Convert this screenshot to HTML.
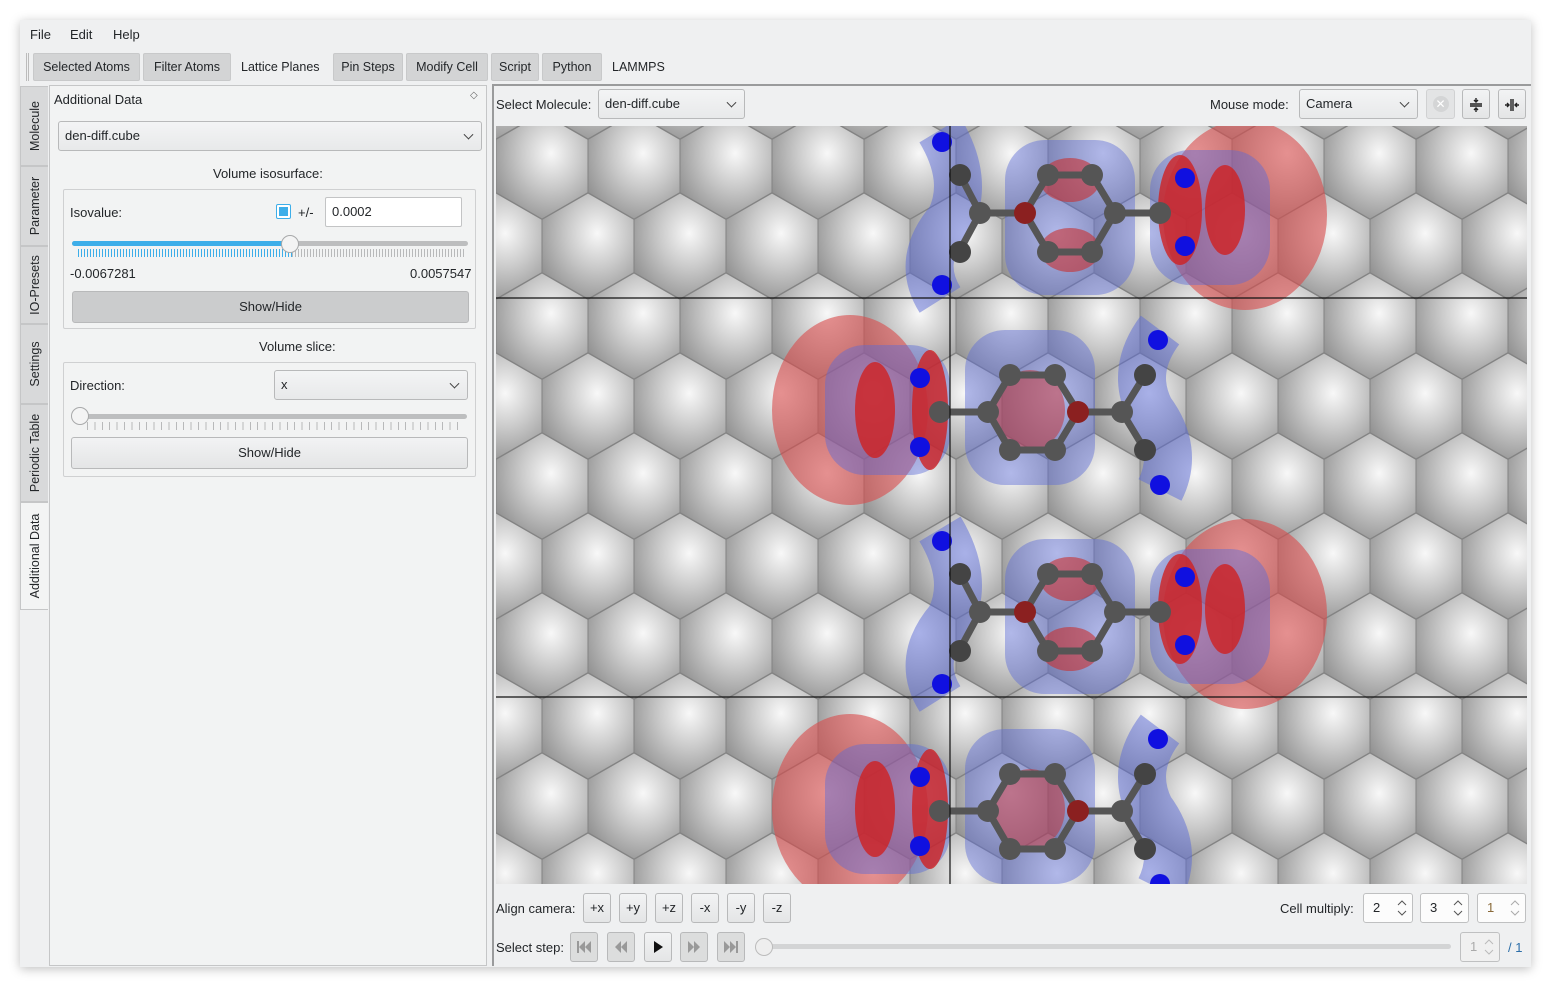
<!DOCTYPE html>
<html><head><meta charset="utf-8"><style>
*{box-sizing:border-box;margin:0;padding:0}
body{width:1551px;height:987px;background:#fff;font-family:"Liberation Sans","DejaVu Sans",sans-serif;font-size:13px;color:#232629;position:relative;overflow:hidden}
.win{position:absolute;left:20px;top:20px;width:1511px;height:947px;background:#eff0f1;box-shadow:0 2px 10px rgba(0,0,0,.25)}
.abs{position:absolute;white-space:nowrap}
.tab{position:absolute;top:33px;height:28px;background:#d3d4d5;border:1px solid #c8c9ca;border-radius:2px;line-height:27px;font-size:12.5px;text-align:center;white-space:nowrap;overflow:hidden}
.btn{position:absolute;background:linear-gradient(#f2f3f4,#e4e5e6);border:1px solid #b8b9ba;border-radius:3px;text-align:center;font-size:13px}
.vt{position:absolute;left:0;width:28px;background:#d8d9da;border:1px solid #c5c6c7;border-right:none}
.vt span{position:absolute;left:50%;top:50%;transform:translate(-50%,-50%) rotate(-90deg);white-space:nowrap;font-size:12.5px}
.combo{position:absolute;background:linear-gradient(#f3f4f5,#e8e9ea);border:1px solid #b8b9ba;border-radius:3px;padding-left:6px;font-size:13px}
.combo:after{content:"";position:absolute;right:9px;top:50%;width:6px;height:6px;border-right:1.3px solid #444;border-bottom:1.3px solid #444;transform:translateY(-70%) rotate(45deg)}
.spin{position:absolute;background:#fcfcfc;border:1px solid #bfc0c1;border-radius:3px;padding-left:9px;line-height:28px}
.spin svg{position:absolute;right:5px;top:4px}
.mb svg{display:block;margin:8px auto}
</style></head><body>
<div class="win">
 <div class="abs" style="left:10px;top:7px">File</div>
 <div class="abs" style="left:50px;top:7px">Edit</div>
 <div class="abs" style="left:93px;top:7px">Help</div>
 <div class="abs" style="left:6px;top:33px;width:3px;height:28px;border-left:1px solid #bbb;border-right:1px solid #bbb"></div>
 <div class="tab" style="left:13px;width:107px">Selected Atoms</div>
 <div class="tab" style="left:123px;width:88px">Filter Atoms</div>
 <div class="abs" style="left:221px;top:40px;font-size:12.5px">Lattice Planes</div>
 <div class="tab" style="left:313px;width:70px">Pin Steps</div>
 <div class="tab" style="left:386px;width:82px">Modify Cell</div>
 <div class="tab" style="left:471px;width:48px">Script</div>
 <div class="tab" style="left:522px;width:60px">Python</div>
 <div class="abs" style="left:592px;top:40px;font-size:12.5px">LAMMPS</div>

 <div class="vt" style="top:66px;height:80px"><span>Molecule</span></div>
 <div class="vt" style="top:146px;height:80px"><span>Parameter</span></div>
 <div class="vt" style="top:226px;height:78px"><span>IO-Presets</span></div>
 <div class="vt" style="top:304px;height:80px"><span>Settings</span></div>
 <div class="vt" style="top:384px;height:98px"><span>Periodic Table</span></div>
 <div class="vt" style="top:482px;height:108px;background:#f3f4f4;border-color:#c5c6c7"><span>Additional Data</span></div>

 <div class="abs" style="left:29px;top:65px;width:438px;height:881px;border:1px solid #c5c6c7;background:#f2f3f3"></div>
 <div class="abs" style="left:34px;top:72px">Additional Data</div>
 <div class="abs" style="left:450px;top:70px;font-size:10px;color:#666">◇</div>
 <div class="combo" style="left:38px;top:101px;width:424px;height:30px;line-height:28px">den-diff.cube</div>
 <div class="abs" style="left:193px;top:146px">Volume isosurface:</div>
 <div class="abs" style="left:43px;top:169px;width:413px;height:140px;border:1px solid #cfd0d1;border-radius:2px"></div>
 <div class="abs" style="left:50px;top:185px">Isovalue:</div>
 <div class="abs" style="left:256px;top:184px;width:15px;height:15px;border:1px solid #3daee9;border-radius:2px;background:#fff"><div style="margin:2px;width:9px;height:9px;background:#3daee9"></div></div>
 <div class="abs" style="left:278px;top:185px">+/-</div>
 <div class="abs" style="left:305px;top:177px;width:137px;height:30px;border:1px solid #c3c4c5;background:#fff;border-radius:2px;line-height:28px;padding-left:6px">0.0002</div>
 <div class="abs" style="left:52px;top:221px;width:396px;height:5px;border-radius:3px;background:#bdbebf"></div>
 <div class="abs" style="left:52px;top:221px;width:218px;height:5px;border-radius:3px;background:#3daee9"></div>
 <div class="abs" style="left:58px;top:229px;width:214px;height:8px;background:repeating-linear-gradient(90deg,#3daee9 0 1px,transparent 1px 3px)"></div>
 <div class="abs" style="left:272px;top:229px;width:172px;height:8px;background:repeating-linear-gradient(90deg,#b8b9ba 0 1px,transparent 1px 3px)"></div>
 <div class="abs" style="left:261px;top:215px;width:18px;height:18px;border-radius:50%;background:#f4f4f4;border:1px solid #a8a9aa"></div>
 <div class="abs" style="left:50px;top:246px">-0.0067281</div>
 <div class="abs" style="left:390px;top:246px">0.0057547</div>
 <div class="btn" style="left:52px;top:271px;width:397px;height:32px;line-height:30px;background:#cbcccd">Show/Hide</div>
 <div class="abs" style="left:239px;top:319px">Volume slice:</div>
 <div class="abs" style="left:43px;top:342px;width:413px;height:115px;border:1px solid #cfd0d1;border-radius:2px"></div>
 <div class="abs" style="left:50px;top:358px">Direction:</div>
 <div class="combo" style="left:254px;top:350px;width:194px;height:30px;line-height:28px">x</div>
 <div class="abs" style="left:60px;top:394px;width:387px;height:5px;border-radius:3px;background:#bdbebf"></div>
 <div class="abs" style="left:67px;top:402px;width:376px;height:8px;background:repeating-linear-gradient(90deg,#b8b9ba 0 1px,transparent 1px 7.4px)"></div>
 <div class="abs" style="left:51px;top:387px;width:18px;height:18px;border-radius:50%;background:#f4f4f4;border:1px solid #a8a9aa"></div>
 <div class="btn" style="left:51px;top:417px;width:397px;height:32px;line-height:30px">Show/Hide</div>

 <div class="abs" style="left:472px;top:64px;width:2px;height:882px;background:#9a9b9c"></div>
 <div class="abs" style="left:474px;top:64px;width:1037px;height:2px;background:#9a9b9c"></div>
 <div class="abs" style="left:476px;top:77px">Select Molecule:</div>
 <div class="combo" style="left:578px;top:69px;width:147px;height:30px;line-height:28px">den-diff.cube</div>
 <div class="abs" style="left:1190px;top:77px">Mouse mode:</div>
 <div class="combo" style="left:1279px;top:69px;width:119px;height:30px;line-height:28px">Camera</div>
 <div class="btn" style="left:1406px;top:69px;width:29px;height:30px;background:#e3e4e5;border-color:#d0d1d2"><div style="margin:6px auto;width:16px;height:16px;border-radius:50%;background:#d4d5d6;color:#fff;font-size:12px;line-height:16px">✕</div></div>
 <div class="btn mb" style="left:1442px;top:69px;width:28px;height:30px"><svg width="14" height="14" viewBox="0 0 14 14"><path d="M1 6h12M1 8h12M7 0v4M5 2l2 2 2-2M7 14v-4M5 12l2-2 2 2" stroke="#222" stroke-width="1.4" fill="none"/></svg></div>
 <div class="btn mb" style="left:1478px;top:69px;width:28px;height:30px"><svg width="14" height="14" viewBox="0 0 14 14"><path d="M6 1v12M8 1v12M0 7h4M2 5l2 2-2 2M14 7h-4M12 5l-2 2 2 2" stroke="#222" stroke-width="1.4" fill="none"/></svg></div>

 <svg class="abs" style="left:476px;top:106px" width="1031" height="758" viewBox="496 126 1031 758">
  <defs>
   <radialGradient id="sp" cx="0.6" cy="0.38" r="0.72">
    <stop offset="0" stop-color="#f8f8f8"/><stop offset="0.45" stop-color="#cacaca"/><stop offset="1" stop-color="#8e8e8e"/>
   </radialGradient>
   <polygon id="hx" points="0,-53 46,-26.5 46,26.5 0,53 -46,26.5 -46,-26.5" fill="url(#sp)" stroke="#838383" stroke-width="1"/>
   <pattern id="hex" x="496" y="126" width="92" height="160" patternUnits="userSpaceOnUse">
    <rect width="92" height="160" fill="#999"/>
    <use href="#hx" x="46" y="40"/>
    <use href="#hx" x="0" y="120"/><use href="#hx" x="92" y="120"/>
    <use href="#hx" x="46" y="200"/>
    <use href="#hx" x="0" y="-40"/><use href="#hx" x="92" y="-40"/>
   </pattern>
   <g id="A">
    <ellipse cx="1245" cy="215" rx="82" ry="95" fill="#d84b4b" opacity="0.6"/>
    <path d="M940 130 Q970 180 950 220 Q915 260 940 300" stroke="#5a6ad8" stroke-width="48" fill="none" opacity="0.5"/>
    <rect x="1005" y="140" width="130" height="155" rx="40" fill="#5a6ad8" opacity="0.45"/>
    <rect x="1150" y="150" width="120" height="135" rx="40" fill="#5a6ad8" opacity="0.45"/>
    <ellipse cx="1180" cy="210" rx="22" ry="55" fill="#d02020" opacity="0.8"/>
    <ellipse cx="1225" cy="210" rx="20" ry="45" fill="#d02020" opacity="0.8"/>
    <ellipse cx="1070" cy="180" rx="30" ry="22" fill="#c83030" opacity="0.6"/>
    <ellipse cx="1070" cy="250" rx="30" ry="22" fill="#c83030" opacity="0.6"/>
    <path d="M1025 213 L1048 175 L1092 175 L1115 213 L1092 252 L1048 252 Z M980 213 L1025 213 M1115 213 L1160 213 M960 175 L980 213 L960 250" stroke="#555" stroke-width="7" fill="none"/>
    <circle cx="1025" cy="213" r="11" fill="#8b2020"/>
    <circle cx="1048" cy="175" r="11" fill="#555"/><circle cx="1092" cy="175" r="11" fill="#555"/>
    <circle cx="1048" cy="252" r="11" fill="#555"/><circle cx="1092" cy="252" r="11" fill="#555"/>
    <circle cx="1115" cy="213" r="11" fill="#555"/><circle cx="980" cy="213" r="11" fill="#555"/>
    <circle cx="1160" cy="213" r="11" fill="#555"/>
    <circle cx="960" cy="175" r="11" fill="#444"/><circle cx="960" cy="252" r="11" fill="#444"/>
    <circle cx="942" cy="142" r="10" fill="#1010e0"/><circle cx="942" cy="285" r="10" fill="#1010e0"/>
    <circle cx="1185" cy="178" r="10" fill="#1010e0"/><circle cx="1185" cy="246" r="10" fill="#1010e0"/>
   </g>
   <g id="B">
    <ellipse cx="850" cy="410" rx="78" ry="95" fill="#d84b4b" opacity="0.6"/>
    <path d="M1160 330 Q1130 370 1150 410 Q1180 450 1160 490" stroke="#5a6ad8" stroke-width="48" fill="none" opacity="0.5"/>
    <rect x="965" y="330" width="130" height="155" rx="40" fill="#5a6ad8" opacity="0.45"/>
    <rect x="825" y="345" width="125" height="130" rx="40" fill="#5a6ad8" opacity="0.45"/>
    <ellipse cx="875" cy="410" rx="20" ry="48" fill="#d02020" opacity="0.8"/>
    <ellipse cx="930" cy="410" rx="18" ry="60" fill="#d02020" opacity="0.8"/>
    <ellipse cx="1030" cy="410" rx="35" ry="40" fill="#c83030" opacity="0.5"/>
    <path d="M988 412 L1010 375 L1055 375 L1078 412 L1055 450 L1010 450 Z M940 412 L988 412 M1078 412 L1122 412 M1145 375 L1122 412 L1145 450" stroke="#555" stroke-width="7" fill="none"/>
    <circle cx="1078" cy="412" r="11" fill="#8b2020"/>
    <circle cx="1010" cy="375" r="11" fill="#555"/><circle cx="1055" cy="375" r="11" fill="#555"/>
    <circle cx="1010" cy="450" r="11" fill="#555"/><circle cx="1055" cy="450" r="11" fill="#555"/>
    <circle cx="988" cy="412" r="11" fill="#555"/><circle cx="1122" cy="412" r="11" fill="#555"/>
    <circle cx="940" cy="412" r="11" fill="#555"/>
    <circle cx="1145" cy="375" r="11" fill="#444"/><circle cx="1145" cy="450" r="11" fill="#444"/>
    <circle cx="1158" cy="340" r="10" fill="#1010e0"/><circle cx="1160" cy="485" r="10" fill="#1010e0"/>
    <circle cx="920" cy="378" r="10" fill="#1010e0"/><circle cx="920" cy="447" r="10" fill="#1010e0"/>
   </g>
  </defs>
  <rect x="496" y="126" width="1031" height="758" fill="url(#hex)"/>
  <use href="#A"/><use href="#B"/>
  <use href="#A" transform="translate(0,399)"/><use href="#B" transform="translate(0,399)"/>
  <line x1="496" y1="298" x2="1527" y2="298" stroke="#111" stroke-width="1.2"/>
  <line x1="496" y1="697" x2="1527" y2="697" stroke="#111" stroke-width="1.2"/>
  <line x1="950" y1="126" x2="950" y2="884" stroke="#111" stroke-width="1.2"/>
 </svg>

 <div class="abs" style="left:476px;top:881px">Align camera:</div>
 <div class="btn" style="left:563px;top:873px;width:28px;height:30px;line-height:28px">+x</div>
 <div class="btn" style="left:599px;top:873px;width:28px;height:30px;line-height:28px">+y</div>
 <div class="btn" style="left:635px;top:873px;width:28px;height:30px;line-height:28px">+z</div>
 <div class="btn" style="left:671px;top:873px;width:28px;height:30px;line-height:28px">-x</div>
 <div class="btn" style="left:707px;top:873px;width:28px;height:30px;line-height:28px">-y</div>
 <div class="btn" style="left:743px;top:873px;width:28px;height:30px;line-height:28px">-z</div>
 <div class="abs" style="left:1260px;top:881px">Cell multiply:</div>
 <div class="spin" style="left:1343px;top:873px;width:50px;height:30px">2<svg width="10" height="20"><path d="M1 7l4-4 4 4M1 13l4 4 4-4" stroke="#555" fill="none"/></svg></div>
 <div class="spin" style="left:1400px;top:873px;width:49px;height:30px">3<svg width="10" height="20"><path d="M1 7l4-4 4 4M1 13l4 4 4-4" stroke="#555" fill="none"/></svg></div>
 <div class="spin" style="left:1457px;top:873px;width:49px;height:30px;color:#8a6a3a">1<svg width="10" height="20"><path d="M1 7l4-4 4 4M1 13l4 4 4-4" stroke="#aaa" fill="none"/></svg></div>

 <div class="abs" style="left:476px;top:920px">Select step:</div>
 <div class="btn mb" style="left:550px;top:912px;width:28px;height:30px;background:#dcdddd"><svg width="14" height="12"><path d="M1 0v12" stroke="#999" stroke-width="2"/><path d="M8 0L2 6l6 6zM14 0L8 6l6 6z" fill="#999"/></svg></div>
 <div class="btn mb" style="left:587px;top:912px;width:28px;height:30px;background:#dcdddd"><svg width="12" height="12"><path d="M6 0L0 6l6 6zM12 0L6 6l6 6z" fill="#999"/></svg></div>
 <div class="btn mb" style="left:624px;top:912px;width:28px;height:30px"><svg width="10" height="12"><path d="M1 0l9 6-9 6z" fill="#111"/></svg></div>
 <div class="btn mb" style="left:660px;top:912px;width:28px;height:30px;background:#dcdddd"><svg width="12" height="12"><path d="M0 0l6 6-6 6zM6 0l6 6-6 6z" fill="#999"/></svg></div>
 <div class="btn mb" style="left:697px;top:912px;width:28px;height:30px;background:#dcdddd"><svg width="14" height="12"><path d="M0 0l6 6-6 6zM6 0l6 6-6 6z" fill="#999"/><path d="M13 0v12" stroke="#999" stroke-width="2"/></svg></div>
 <div class="abs" style="left:738px;top:924px;width:693px;height:5px;border-radius:3px;background:#d3d4d5"></div>
 <div class="abs" style="left:735px;top:918px;width:18px;height:18px;border-radius:50%;background:#eee;border:1px solid #bbb"></div>
 <div class="spin" style="left:1440px;top:912px;width:40px;height:30px;color:#aaa;background:#f0f0f0">1<svg width="10" height="20"><path d="M1 7l4-4 4 4M1 13l4 4 4-4" stroke="#bbb" fill="none"/></svg></div>
 <div class="abs" style="left:1488px;top:920px;color:#2c6ea8">/ 1</div>
</div>
</body></html>
